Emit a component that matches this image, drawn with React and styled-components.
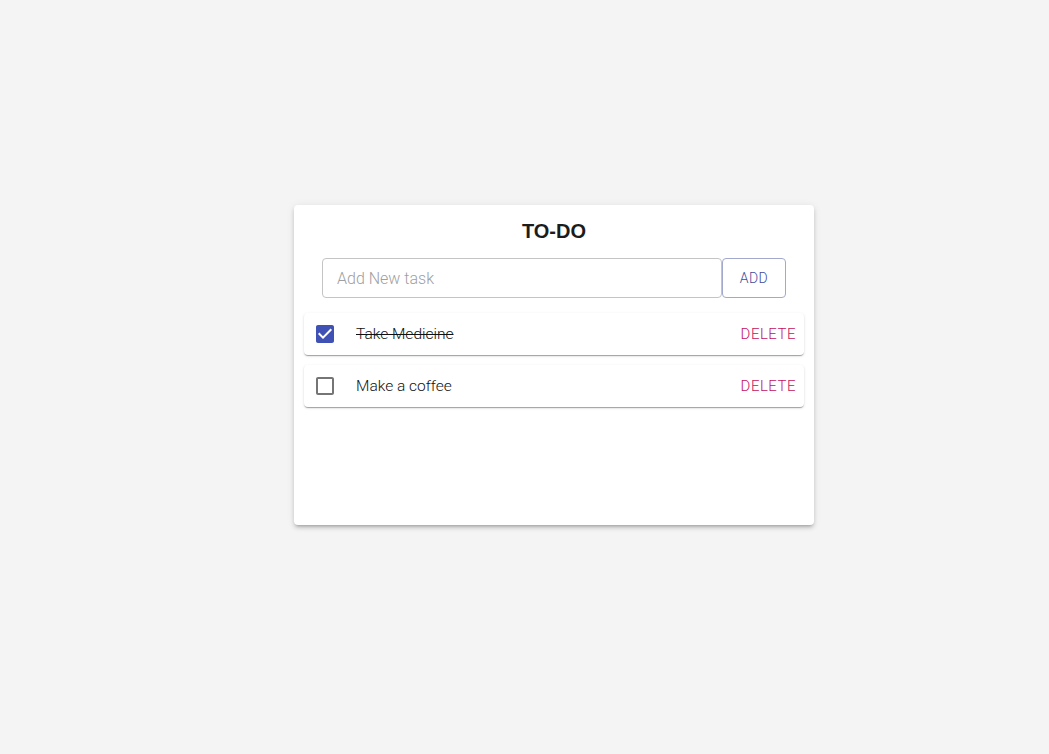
import React, { useState } from "react";
import styled, { createGlobalStyle } from "styled-components";

const Global = createGlobalStyle`
  html, body { margin: 0; padding: 0; background: #f4f4f4; }
  body { font-family: Roboto, "Liberation Sans", Arial, sans-serif; }
  * { box-sizing: border-box; }
`;

const Page = styled.div`
  width: 1049px;
  height: 754px;
  display: flex;
  justify-content: center;
  padding-top: 205px;
  padding-left: 59px;
`;

const Card = styled.div`
  width: 520px;
  height: 320px;
  background: #fff;
  border-radius: 4px;
  box-shadow: 0px 3px 3px -2px rgba(0,0,0,0.2), 0px 3px 4px 0px rgba(0,0,0,0.14), 0px 1px 8px 0px rgba(0,0,0,0.08);
  padding: 16px 10px;
  display: flex;
  flex-direction: column;
`;

const Title = styled.h1`
  margin: 0;
  font-family: "Liberation Sans", Arial, sans-serif;
  font-weight: 700;
  font-size: 20px;
  line-height: 20px;
  color: #1c1c1c;
  text-align: center;
`;

const Form = styled.div`
  display: flex;
  justify-content: center;
  margin-top: 17px;
`;

const Input = styled.input`
  width: 400px;
  height: 40px;
  border: 1px solid #c4c4c4;
  border-radius: 4px;
  padding: 0 14px;
  font-family: Roboto, sans-serif;
  font-weight: 300;
  font-size: 16px;
  color: #333;
  outline: none;
  &::placeholder { color: #a0a0a0; opacity: 1; }
`;

const AddButton = styled.button`
  width: 64px;
  height: 40px;
  background: #fff;
  border: 1px solid #a3a9cc;
  border-radius: 4px;
  color: #3f4c9a;
  font-family: Roboto, sans-serif;
  font-weight: 300;
  font-size: 14px;
  letter-spacing: 0.5px;
  text-transform: uppercase;
  padding: 0;
`;

const List = styled.div`
  display: flex;
  flex-direction: column;
  gap: 10px;
  margin-top: 15px;
`;

const Row = styled.div`
  height: 42px;
  background: #fff;
  border-radius: 4px;
  box-shadow: 0px 2px 1px -1px rgba(0,0,0,0.2), 0px 1px 1px 0px rgba(0,0,0,0.14), 0px 1px 3px 0px rgba(0,0,0,0.12);
  display: flex;
  align-items: center;
  padding: 0 8px 0 9px;
`;

const CheckIcon = styled.svg`
  width: 24px;
  height: 24px;
  flex: none;
  cursor: pointer;
  fill: ${(p) => (p.$checked ? "#3f51b5" : "#757575")};
`;

const Label = styled.span`
  flex: 1;
  margin-left: 19px;
  font-family: Roboto, sans-serif;
  font-weight: 300;
  font-size: 15.5px;
  color: #111;
  text-decoration: ${(p) => (p.$done ? "line-through" : "none")};
`;

const DeleteButton = styled.button`
  background: none;
  border: none;
  padding: 0;
  color: #c2125f;
  font-family: Roboto, sans-serif;
  font-weight: 300;
  font-size: 15px;
  letter-spacing: 0.5px;
  text-transform: uppercase;
`;

function Check({ checked, onClick }) {
  return (
    <CheckIcon viewBox="0 0 24 24" $checked={checked} onClick={onClick}>
      {checked ? (
        <path d="M19 3H5c-1.11 0-2 .9-2 2v14c0 1.1.89 2 2 2h14c1.11 0 2-.9 2-2V5c0-1.1-.89-2-2-2zm-9 14l-5-5 1.41-1.41L10 14.17l7.59-7.59L19 8l-9 9z" />
      ) : (
        <path d="M19 5v14H5V5h14m0-2H5c-1.1 0-2 .9-2 2v14c0 1.1.9 2 2 2h14c1.1 0 2-.9 2-2V5c0-1.1-.9-2-2-2z" />
      )}
    </CheckIcon>
  );
}

export default function App() {
  const [tasks, setTasks] = useState([
    { id: 1, text: "Take Medicine", done: true },
    { id: 2, text: "Make a coffee", done: false },
  ]);
  const toggle = (id) =>
    setTasks((t) => t.map((x) => (x.id === id ? { ...x, done: !x.done } : x)));
  return (
    <Page>
      <Global />
      <Card>
        <Title>TO-DO</Title>
        <Form>
          <Input placeholder="Add New task" />
          <AddButton>Add</AddButton>
        </Form>
        <List>
          {tasks.map((t) => (
            <Row key={t.id}>
              <Check checked={t.done} onClick={() => toggle(t.id)} />
              <Label $done={t.done}>{t.text}</Label>
              <DeleteButton>Delete</DeleteButton>
            </Row>
          ))}
        </List>
      </Card>
    </Page>
  );
}
